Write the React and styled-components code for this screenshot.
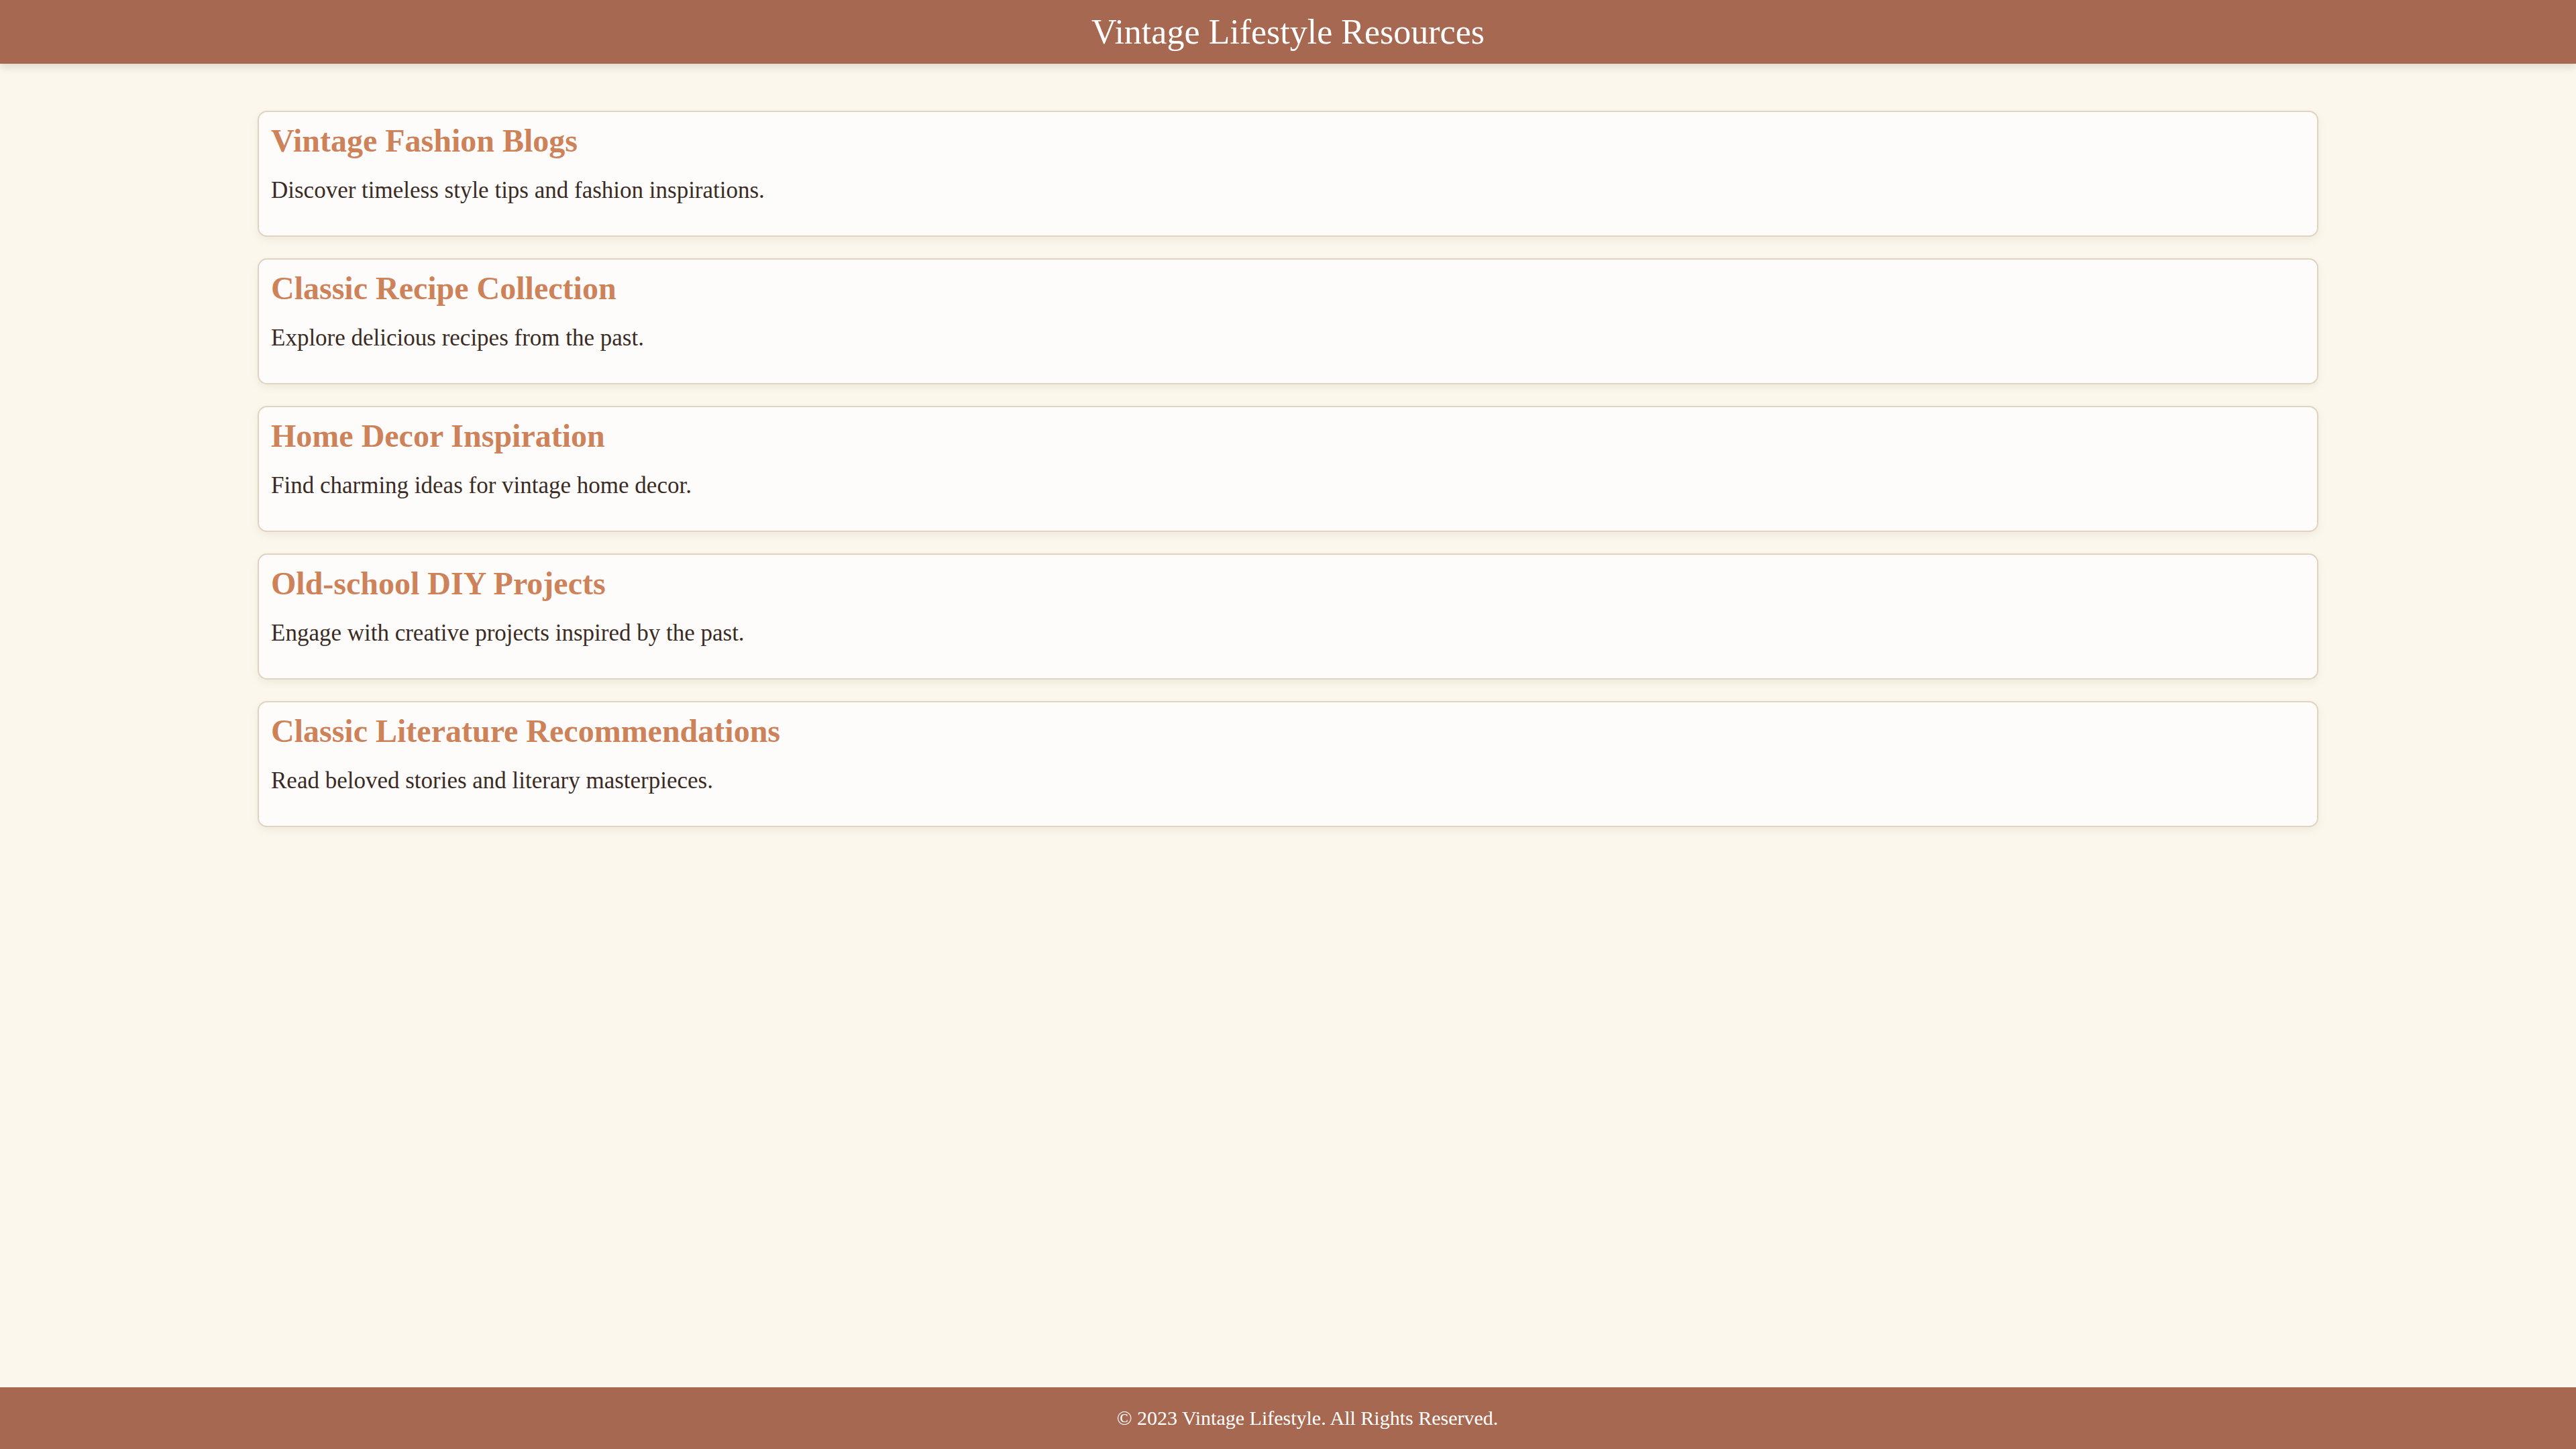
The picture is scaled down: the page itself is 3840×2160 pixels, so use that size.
import React from "react";
import styled, { createGlobalStyle } from "styled-components";

const GlobalStyle = createGlobalStyle`
  html, body {
    margin: 0;
    padding: 0;
  }
  body {
    background-color: #fbf7ec;
    font-family: "Liberation Serif", "DejaVu Serif", serif;
    color: #3b2b25;
  }
`;

const Page = styled.div`
  min-height: 100vh;
  display: flex;
  flex-direction: column;
`;

const Header = styled.header`
  height: 95px;
  background-color: #a66850;
  box-shadow: 0 5px 12px rgba(0, 0, 0, 0.12);
  display: flex;
  align-items: center;
  justify-content: center;
  position: relative;
  z-index: 1;
`;

const Title = styled.h1`
  margin: 0;
  font-size: 52px;
  font-weight: normal;
  color: #ffffff;
`;

const Main = styled.main`
  flex: 1;
  width: 80%;
  margin: 0 auto;
  padding-top: 70px;
  display: flex;
  flex-direction: column;
  gap: 32px;
`;

const Card = styled.section`
  height: 188px;
  box-sizing: border-box;
  background-color: #fdfcfb;
  border: 2px solid #e0d4c1;
  border-radius: 14px;
  box-shadow: 0 5px 12px rgba(120, 90, 50, 0.08);
  padding: 17px 18px 0;
`;

const CardTitle = styled.h2`
  margin: 0;
  font-size: 48px;
  font-weight: bold;
  line-height: 52px;
  color: #cd8259;
`;

const CardText = styled.p`
  margin: 28px 0 0;
  font-size: 35px;
  line-height: 40px;
  color: #3b2b25;
`;

const Footer = styled.footer`
  height: 92px;
  box-sizing: border-box;
  padding-left: 58px;
  background-color: #a66850;
  color: #ffffff;
  display: flex;
  align-items: center;
  justify-content: center;
  font-size: 30px;
`;

const resources = [
  { title: "Vintage Fashion Blogs", text: "Discover timeless style tips and fashion inspirations." },
  { title: "Classic Recipe Collection", text: "Explore delicious recipes from the past." },
  { title: "Home Decor Inspiration", text: "Find charming ideas for vintage home decor." },
  { title: "Old-school DIY Projects", text: "Engage with creative projects inspired by the past." },
  { title: "Classic Literature Recommendations", text: "Read beloved stories and literary masterpieces." },
];

const App = () => {
  return (
    <Page>
      <GlobalStyle />
      <Header>
        <Title>Vintage Lifestyle Resources</Title>
      </Header>
      <Main>
        {resources.map((r) => (
          <Card key={r.title}>
            <CardTitle>{r.title}</CardTitle>
            <CardText>{r.text}</CardText>
          </Card>
        ))}
      </Main>
      <Footer>© 2023 Vintage Lifestyle. All Rights Reserved.</Footer>
    </Page>
  );
};

export default App;
